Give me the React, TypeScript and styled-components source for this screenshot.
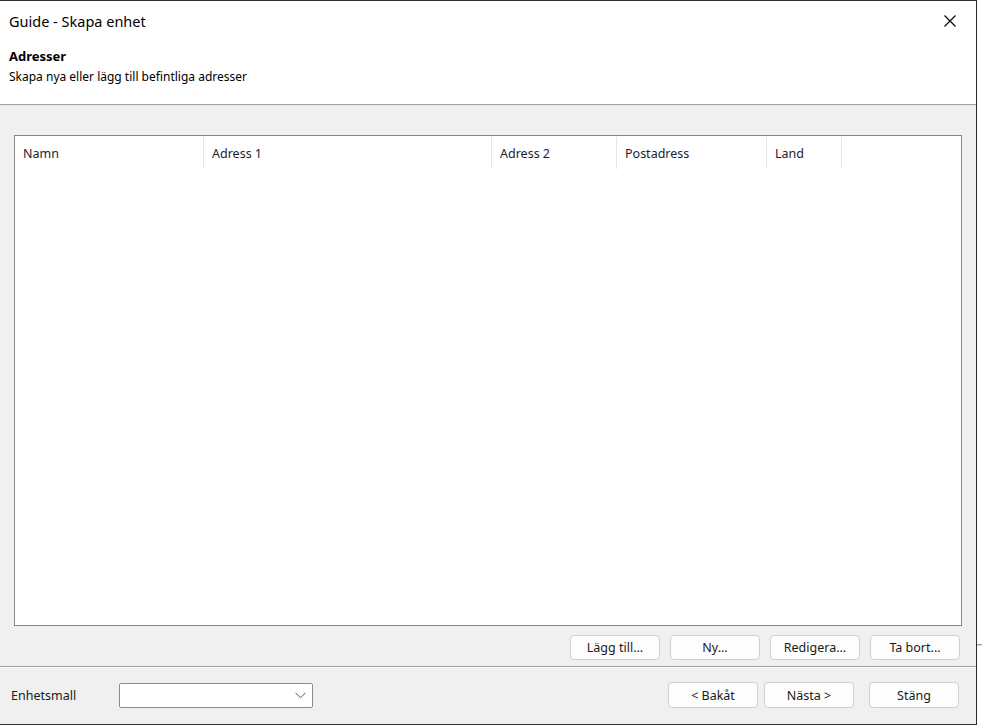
import React from "react"
import styled, { createGlobalStyle } from "styled-components"

const GlobalStyle = createGlobalStyle`
	*, *::before, *::after {
		box-sizing: border-box;
	}
	html, body {
		margin: 0;
		padding: 0;
		background: #ffffff;
	}
	body {
		font-family: "Segoe UI", "Noto Sans", "Open Sans", sans-serif;
		font-size: 12px;
		color: #000;
	}
`

const Page = styled.div`
	display: flex;
	width: 982px;
	height: 727px;
	overflow: hidden;
`

const Window = styled.div`
	display: flex;
	flex-direction: column;
	width: 977px;
	height: 725px;
	border-top: 1px solid #2b2b2b;
	border-right: 1px solid #2b2b2b;
	border-bottom: 1px solid #2b2b2b;
	background: #f0f0f0;
	flex-shrink: 0;
`

const Gutter = styled.div`
	flex: 1;
	padding-top: 644px;
`

const GutterLine = styled.div`
	height: 2px;
	border-top: 1px solid #a0a0a0;
	border-bottom: 1px solid #d8d8d8;
`

const TitleBar = styled.div`
	display: flex;
	align-items: center;
	justify-content: space-between;
	height: 40px;
	padding: 0 16px 0 9px;
	background: #fff;
	font-size: 14.5px;
	color: #000;
`

const CloseButton = styled.button`
	display: flex;
	align-items: center;
	justify-content: center;
	width: 20px;
	height: 20px;
	padding: 0;
	border: none;
	background: transparent;
`

const Header = styled.div`
	height: 64px;
	padding: 6px 9px 0;
	background: #fff;
	border-bottom: 1px solid #a0a0a0;
`

const HeaderTitle = styled.div`
	font-weight: 700;
	font-size: 13px;
	line-height: 18px;
`

const HeaderText = styled.div`
	font-size: 12px;
	line-height: 24px;
`

const Body = styled.div`
	display: flex;
	flex-direction: column;
	padding: 29px 14px 0 14px;
	border-top: 1px solid #e6e6e6;
`

const ListBox = styled.div`
	height: 491px;
	border: 1px solid #828790;
	background: #fff;
`

const HeaderRow = styled.div`
	display: flex;
	height: 33px;
	padding-top: 1px;
`

const Column = styled.div<{ $w: number }>`
	display: flex;
	align-items: center;
	width: ${p => p.$w}px;
	padding-left: 8px;
	border-right: 1px solid #e5e5e5;
	color: #1c1c2e;
	font-size: 12.5px;
`

const ActionRow = styled.div`
	display: flex;
	justify-content: flex-end;
	gap: 10px;
	margin: 0 -14px;
	padding: 9px 16px 6px 0;
	border-bottom: 1px solid #a0a0a0;
`

const Button = styled.button<{ $h?: number }>`
	width: 90px;
	height: ${p => p.$h ?? 25}px;
	border: 1px solid #d0d0d0;
	border-radius: 4px;
	background: #fdfdfd;
	font-family: "Segoe UI", "Noto Sans", "Open Sans", sans-serif;
	font-size: 12.5px;
	color: #1a1a1a;
	padding: 0;
`

const Footer = styled.div`
	display: flex;
	align-items: center;
	padding: 14px 17px 0 11px;
	border-top: 1px solid #fafafa;
`

const FooterLabel = styled.div`
	width: 108px;
	font-size: 12.5px;
	color: #1a1a1a;
`

const Combo = styled.div`
	display: flex;
	align-items: center;
	justify-content: flex-end;
	width: 194px;
	height: 25px;
	padding-right: 6px;
	border: 1px solid #8c8c8c;
	border-radius: 2px;
	background: #fff;
`

const NavButtons = styled.div`
	display: flex;
	margin-left: auto;
	gap: 6px;
`

const CloseSpacer = styled.div`
	width: 3px;
`

const columns = [
	{ name: "Namn", w: 189 },
	{ name: "Adress 1", w: 288 },
	{ name: "Adress 2", w: 125 },
	{ name: "Postadress", w: 150 },
	{ name: "Land", w: 75 },
]

export default function App() {
	return (
		<Page>
			<GlobalStyle />
			<Window>
				<TitleBar>
					<span>Guide - Skapa enhet</span>
					<CloseButton aria-label="Stäng">
						<svg width="12" height="12" viewBox="0 0 12 12">
							<path d="M0.5 0.5 L11.5 11.5 M11.5 0.5 L0.5 11.5" stroke="#000" strokeWidth="1.1" />
						</svg>
					</CloseButton>
				</TitleBar>
				<Header>
					<HeaderTitle>Adresser</HeaderTitle>
					<HeaderText>Skapa nya eller lägg till befintliga adresser</HeaderText>
				</Header>
				<Body>
					<ListBox>
						<HeaderRow>
							{columns.map(c => (
								<Column key={c.name} $w={c.w}>{c.name}</Column>
							))}
						</HeaderRow>
					</ListBox>
					<ActionRow>
						<Button>Lägg till...</Button>
						<Button>Ny...</Button>
						<Button>Redigera...</Button>
						<Button>Ta bort...</Button>
					</ActionRow>
				</Body>
				<Footer>
					<FooterLabel>Enhetsmall</FooterLabel>
					<Combo>
						<svg width="11" height="7" viewBox="0 0 11 7">
							<path d="M0.5 0.8 L5.5 5.8 L10.5 0.8" fill="none" stroke="#555" strokeWidth="1" />
						</svg>
					</Combo>
					<NavButtons>
						<Button $h={26}>&lt; Bakåt</Button>
						<Button $h={26}>Nästa &gt;</Button>
						<CloseSpacer />
						<Button $h={26}>Stäng</Button>
					</NavButtons>
				</Footer>
			</Window>
			<Gutter>
				<GutterLine />
			</Gutter>
		</Page>
	)
}
